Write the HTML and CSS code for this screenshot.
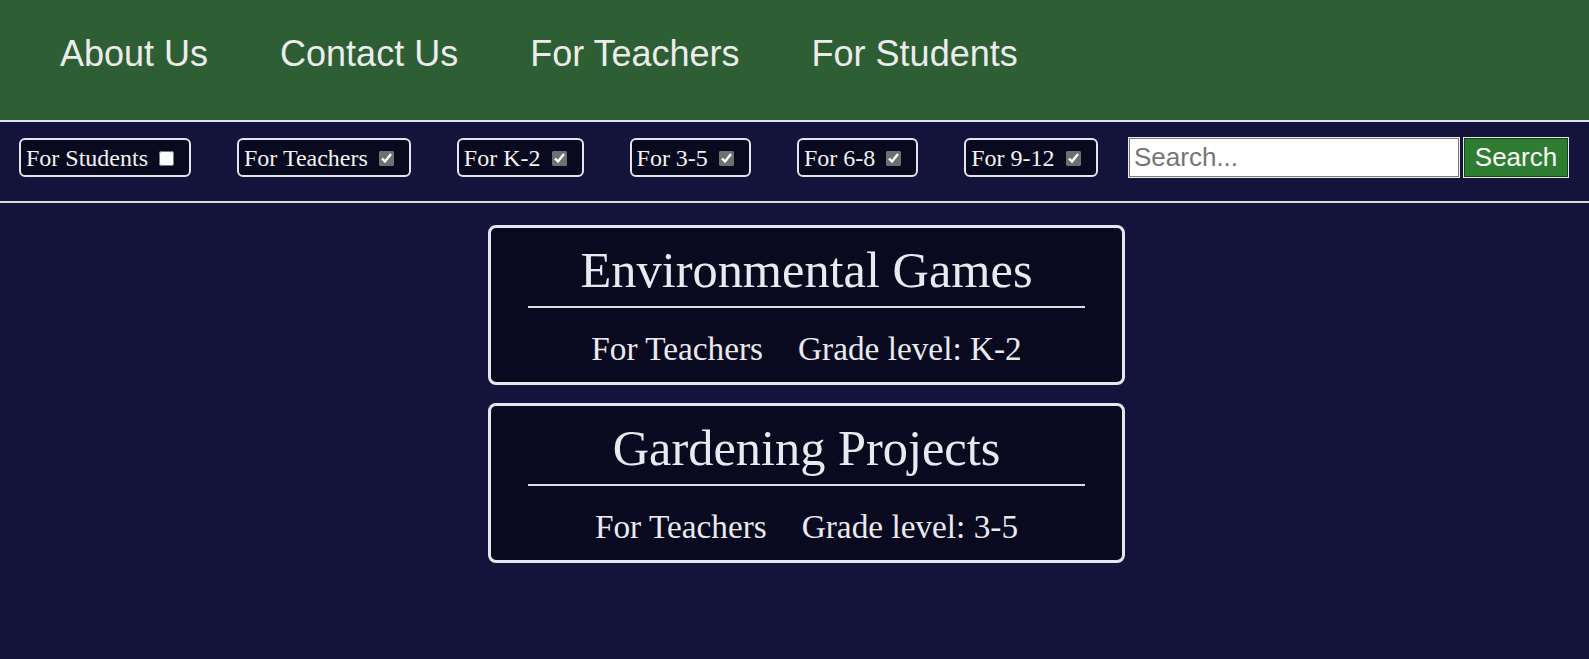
FILE: index.html
```html
<!DOCTYPE html>
<html lang="en">
<head>
<meta charset="utf-8">
<title>Environmental Resources</title>
<link rel="stylesheet" href="styles.css">
</head>
<body>
<header class="site-header">
  <nav>
    <ul class="nav-list">
      <li><a href="#">About Us</a></li>
      <li><a href="#">Contact Us</a></li>
      <li><a href="#">For Teachers</a></li>
      <li><a href="#">For Students</a></li>
    </ul>
  </nav>
</header>
<section class="filter-bar">
  <div class="filters">
    <label class="filter"><span class="filter-text">For Students</span><input type="checkbox"></label>
    <label class="filter"><span class="filter-text">For Teachers</span><input type="checkbox" checked></label>
    <label class="filter"><span class="filter-text">For K-2</span><input type="checkbox" checked></label>
    <label class="filter"><span class="filter-text">For 3-5</span><input type="checkbox" checked></label>
    <label class="filter"><span class="filter-text">For 6-8</span><input type="checkbox" checked></label>
    <label class="filter"><span class="filter-text">For 9-12</span><input type="checkbox" checked></label>
  </div>
  <form class="search">
    <input class="search-input" type="text" placeholder="Search...">
    <button class="search-btn" type="button">Search</button>
  </form>
</section>
<main class="results">
  <article class="card">
    <h2 class="card-title">Environmental Games</h2>
    <div class="card-meta"><span>For Teachers</span><span>Grade level: K-2</span></div>
  </article>
  <article class="card">
    <h2 class="card-title">Gardening Projects</h2>
    <div class="card-meta"><span>For Teachers</span><span>Grade level: 3-5</span></div>
  </article>
</main>
</body>
</html>
```
FILE: styles.css
```css
html, body {
  margin: 0;
  padding: 0;
}
body {
  background: #13133b;
  font-family: "Liberation Serif", "Times New Roman", serif;
  color: #e9e9f0;
}
.site-header {
  background: #2e5f34;
  height: 120px;
  border-bottom: 2px solid #e2e2e2;
  box-sizing: content-box;
}
.nav-list {
  list-style: none;
  margin: 0;
  padding: 33px 0 0 24px;
  display: flex;
}
.nav-list a {
  display: block;
  padding: 0 36px;
  font-family: "Liberation Sans", Arial, sans-serif;
  font-size: 36px;
  color: #ececec;
  text-decoration: none;
}
.filter-bar {
  display: flex;
  align-items: center;
  padding: 15px 20px 23px 19px;
  border-bottom: 2px solid #d8d8d8;
}
.filters {
  display: flex;
  align-items: center;
  gap: 46px;
}
.filter {
  flex-shrink: 0;
  white-space: nowrap;
  box-sizing: border-box;
  height: 39px;
  display: inline-flex;
  align-items: center;
  background: #090a1f;
  border: 2px solid #e4e4ea;
  border-radius: 6px;
  padding: 1px 13px 0 5px;
  font-size: 24px;
  line-height: 28px;
  color: #f2f2f2;
}
.filter-text {
  white-space: nowrap;
}
.filter input {
  flex-shrink: 0;
  width: 15px;
  height: 15px;
  margin: 0 2px 0 11px;
  accent-color: #6f6f6f;
}
.search {
  flex-shrink: 0;
  margin: 0 0 0 auto;
  display: flex;
  gap: 3px;
}
.search-input {
  box-sizing: border-box;
  width: 332px;
  height: 41px;
  border: 1px solid #ececec;
  box-shadow: inset 0 0 0 1px #7a7a7a;
  background: #fff;
  padding: 0 5px;
  font-family: "Liberation Sans", Arial, sans-serif;
  font-size: 26px;
  color: #222;
  outline: none;
}
.search-input::placeholder {
  color: #767676;
}
.search-btn {
  box-sizing: border-box;
  width: 106px;
  height: 41px;
  background: #2e7d32;
  border: 1px solid #e6e6e6;
  box-shadow: inset 0 0 0 1px #0d4a12;
  color: #fff;
  font-family: "Liberation Sans", Arial, sans-serif;
  font-size: 26px;
  padding: 0;
}
.results {
  padding: 22px 0 0 24px;
  display: flex;
  flex-direction: column;
  gap: 18px;
}
.card {
  box-sizing: border-box;
  width: 637px;
  margin: 0 auto;
  background: #090a1f;
  border: 3px solid #e6e6ee;
  border-radius: 8px;
  padding: 13px 37px 14px;
}
.card-title {
  margin: 0;
  font-weight: normal;
  font-size: 50.4px;
  line-height: 58px;
  text-align: center;
  padding-bottom: 7px;
  border-bottom: 2px solid #dcdce4;
}
.card-meta {
  margin-top: 22px;
  display: flex;
  justify-content: center;
  gap: 35px;
  font-size: 33.3px;
  line-height: 38px;
}
```
